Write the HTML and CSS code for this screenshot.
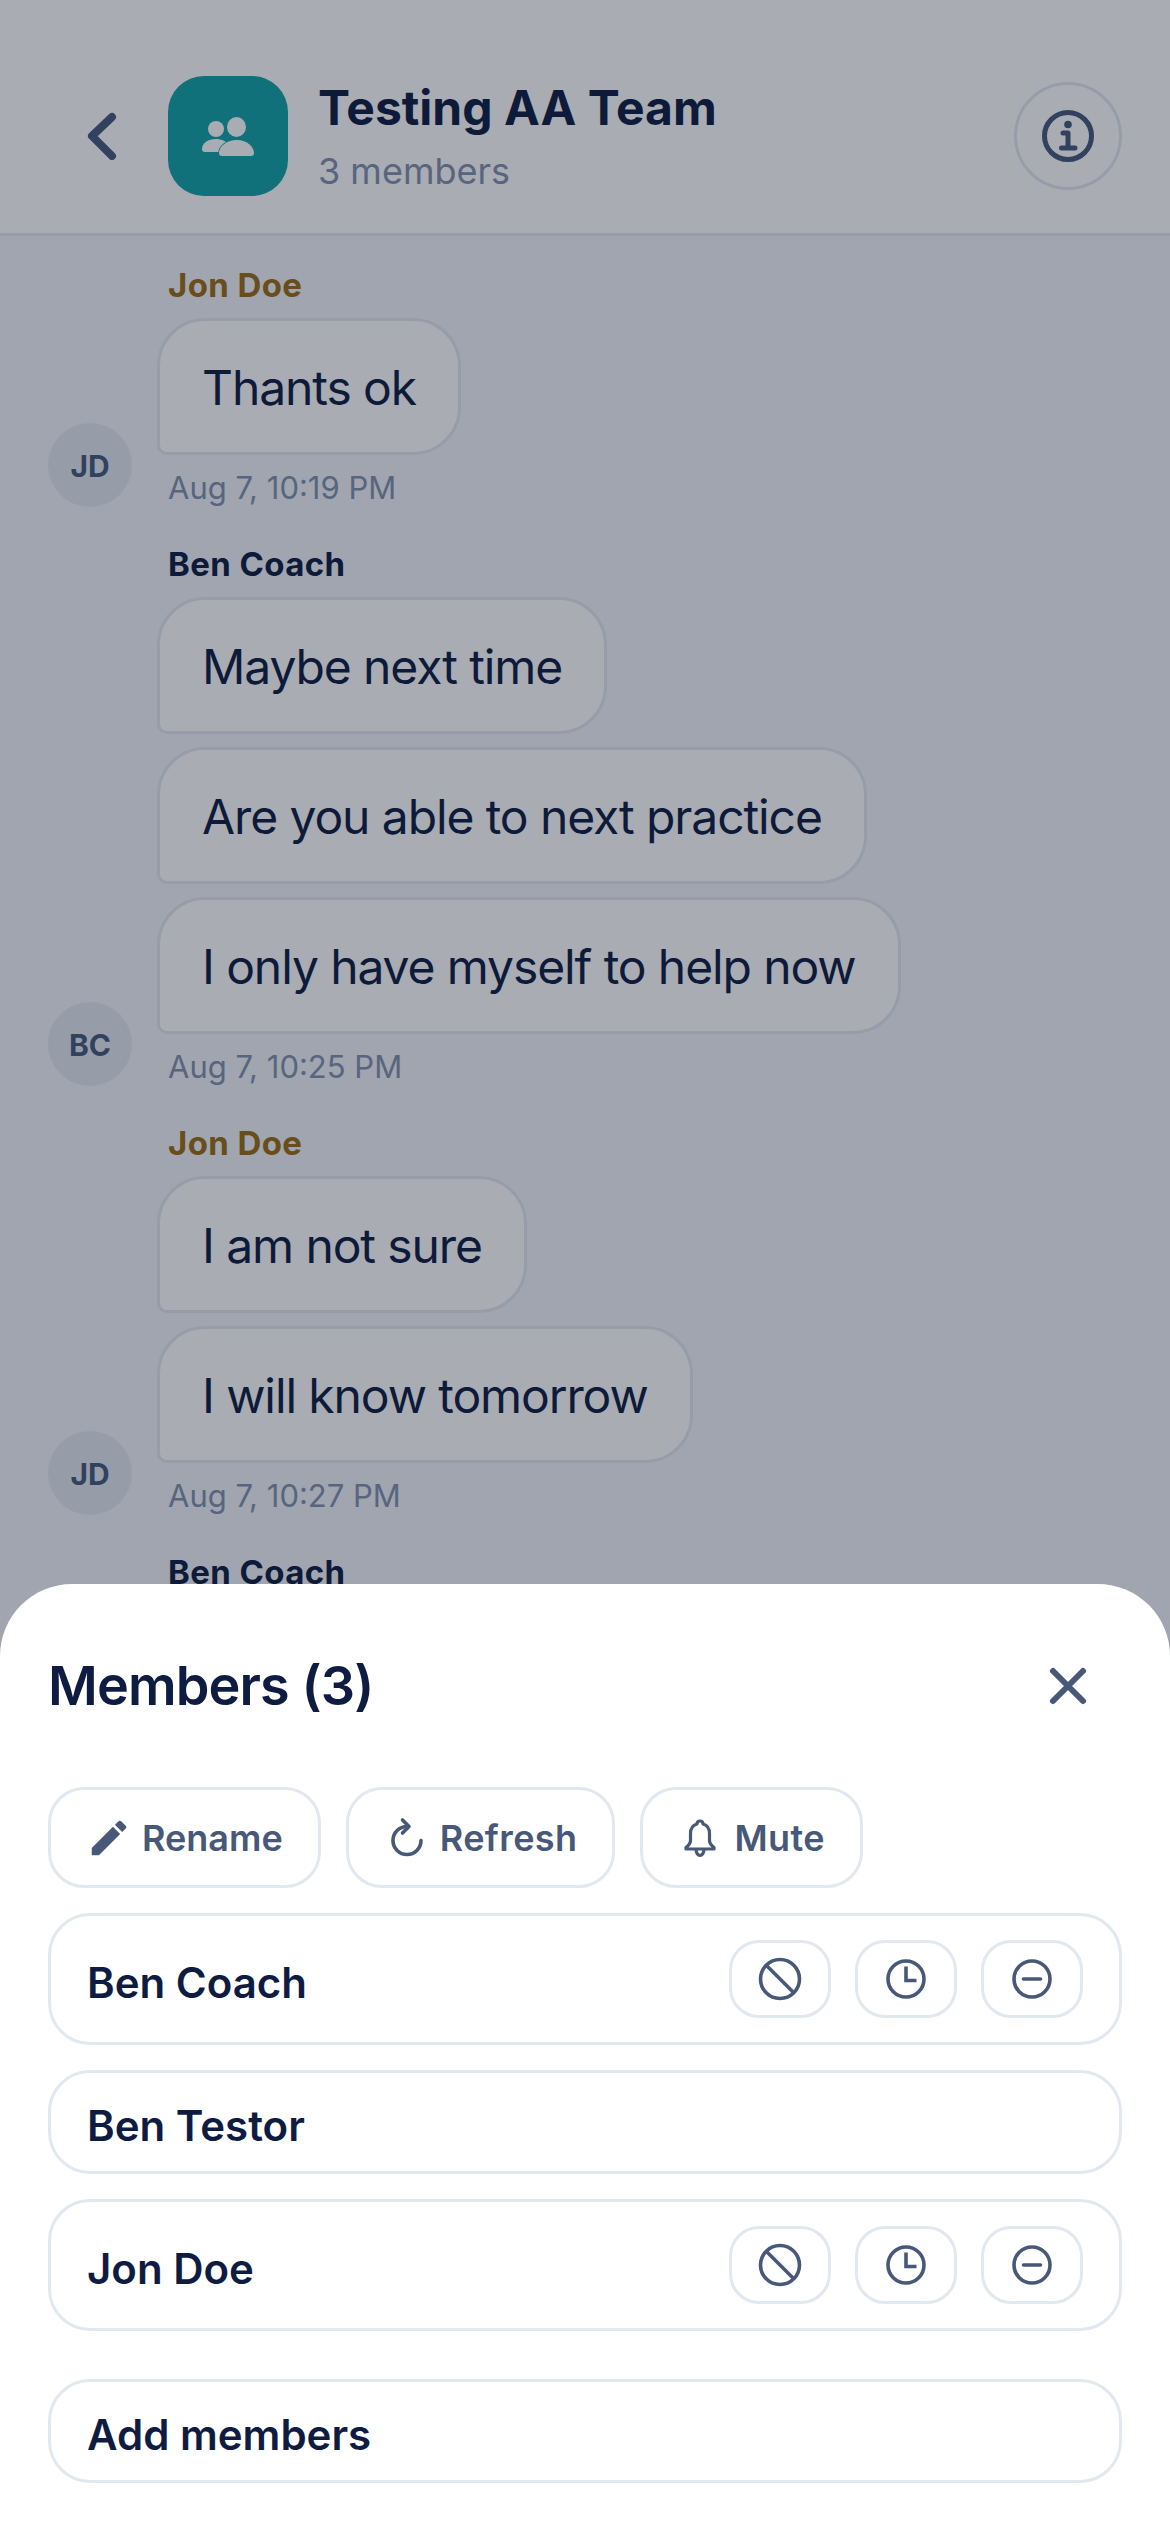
FILE: index.html
```html
<!DOCTYPE html>
<html lang="en">
<head>
  <meta charset="UTF-8" />
  <meta name="viewport" content="width=device-width, initial-scale=1.0"/>
  <title>Testing AA Team</title>
  <link rel="stylesheet" href="styles.css">
</head>
<body>
  <svg class="sprite" aria-hidden="true">
    <symbol id="icon-ban" viewBox="0 0 48 48">
      <circle cx="24" cy="24" r="19.5" fill="none" stroke="currentColor" stroke-width="3.6"/>
      <path d="M10.5 10.5L37.5 37.5" fill="none" stroke="currentColor" stroke-width="3.6"/>
    </symbol>
    <symbol id="icon-clock" viewBox="0 0 48 48">
      <circle cx="24" cy="24" r="18" fill="none" stroke="currentColor" stroke-width="3.6"/>
      <path d="M24 11.5V25.5H34.5" fill="none" stroke="currentColor" stroke-width="3.6"/>
    </symbol>
    <symbol id="icon-minus" viewBox="0 0 48 48">
      <circle cx="24" cy="24" r="18" fill="none" stroke="currentColor" stroke-width="3.6"/>
      <path d="M15.5 24H32.5" fill="none" stroke="currentColor" stroke-width="3.6" stroke-linecap="round"/>
    </symbol>
  </svg>

  <div class="chat-page">
    <header class="chat-header">
      <button class="back-btn" aria-label="Back">
        <svg width="32" height="48" viewBox="0 0 32 48">
          <path d="M26 5L6 24L26 44" fill="none" stroke="currentColor" stroke-width="8" stroke-linecap="round" stroke-linejoin="round"/>
        </svg>
      </button>
      <div class="team-tile">
        <svg width="56" height="44" viewBox="200 112 56 44">
          <circle cx="216" cy="127" r="8" fill="#fff"/>
          <path d="M202 147C202 141 208 137 216 137C221 137 226 139 229 143L222 150H205C203 150 202 149 202 147Z" fill="#fff"/>
          <ellipse cx="236.500" cy="125" rx="9.500" ry="10" fill="#fff"/>
          <path d="M219 151C219 144 227 138 237 138C247 138 254 145 254 151C254 153 253 154 251 154H222C220 154 219 153 219 151Z" fill="#fff" stroke="#12a4a8" stroke-width="1.500" paint-order="stroke"/>
        </svg>
      </div>
      <div class="team-info">
        <h1>Testing AA Team</h1>
        <p>3 members</p>
      </div>
      <button class="info-btn" aria-label="Info">
        <svg width="52" height="52" viewBox="0 0 52 52">
          <circle cx="26" cy="26" r="23.500" fill="none" stroke="currentColor" stroke-width="5"/>
          <circle cx="26" cy="14.500" r="3.800" fill="currentColor"/>
          <path d="M21 23H26V38M19.500 38H33" fill="none" stroke="currentColor" stroke-width="5" stroke-linecap="round" stroke-linejoin="round"/>
        </svg>
      </button>
    </header>

    <main class="chat-list">
      <section class="msg-group">
        <div class="avatar">JD</div>
        <div class="msg-body">
          <div class="sender sender-jon">Jon Doe</div>
          <div class="bubble">Thants ok</div>
          <div class="stamp">Aug 7, 10:19 PM</div>
        </div>
      </section>

      <section class="msg-group">
        <div class="avatar">BC</div>
        <div class="msg-body">
          <div class="sender">Ben Coach</div>
          <div class="bubble">Maybe next time</div>
          <div class="bubble">Are you able to next practice</div>
          <div class="bubble">I only have myself to help now</div>
          <div class="stamp">Aug 7, 10:25 PM</div>
        </div>
      </section>

      <section class="msg-group">
        <div class="avatar">JD</div>
        <div class="msg-body">
          <div class="sender sender-jon">Jon Doe</div>
          <div class="bubble">I am not sure</div>
          <div class="bubble">I will know tomorrow</div>
          <div class="stamp">Aug 7, 10:27 PM</div>
        </div>
      </section>

      <section class="msg-group">
        <div class="msg-body msg-body-solo">
          <div class="sender">Ben Coach</div>
        </div>
      </section>
    </main>
  </div>

  <div class="overlay"></div>

  <aside class="sheet">
    <div class="sheet-head">
      <h2>Members (3)</h2>
      <button class="close-btn" aria-label="Close">
        <svg width="40" height="40" viewBox="0 0 40 40">
          <path d="M5 5L35 35M35 5L5 35" fill="none" stroke="currentColor" stroke-width="6" stroke-linecap="round"/>
        </svg>
      </button>
    </div>

    <div class="sheet-actions">
      <button class="action-btn">
        <svg width="46" height="46" viewBox="0 0 24 24">
          <path fill="currentColor" d="M3 17.250V21h3.750L17.810 9.940l-3.750-3.750L3 17.250zM20.710 7.040a1 1 0 0 0 0-1.410l-2.340-2.340a1 1 0 0 0-1.410 0l-1.830 1.830 3.750 3.750 1.830-1.830z"/>
        </svg>
        Rename
      </button>
      <button class="action-btn">
        <svg width="46" height="46" viewBox="-5 -3 46 46">
          <path d="M18 8.500A14 14 0 1 0 32 22.500" fill="none" stroke="currentColor" stroke-width="3.600" stroke-linecap="round"/>
          <path d="M13.500 2L20 8.500L13.500 15" fill="none" stroke="currentColor" stroke-width="3.600" stroke-linecap="round" stroke-linejoin="round"/>
        </svg>
        Refresh
      </button>
      <button class="action-btn">
        <svg width="46" height="46" viewBox="-4 -3 46 46">
          <path d="M18 3C16 3 15 4.500 15 6C10 7.500 8.500 11.500 8.500 15.500V22.500C8.500 25.500 6.500 27.500 4 29.500V31H32V29.500C29.500 27.500 27.500 25.500 27.500 22.500V15.500C27.500 11.500 26 7.500 21 6C21 4.500 20 3 18 3Z" fill="none" stroke="currentColor" stroke-width="3.200" stroke-linejoin="round"/>
          <path d="M14 31C14 35 16 37.500 18 37.500C20 37.500 22 35 22 31" fill="none" stroke="currentColor" stroke-width="3.200"/>
        </svg>
        Mute
      </button>
    </div>

    <div class="member-list">
      <div class="member-row">
        <span class="member-name">Ben Coach</span>
        <div class="member-tools">
          <button class="tool-btn" aria-label="Ban"><svg width="48" height="48"><use href="#icon-ban"/></svg></button>
          <button class="tool-btn" aria-label="Timeout"><svg width="48" height="48"><use href="#icon-clock"/></svg></button>
          <button class="tool-btn" aria-label="Remove"><svg width="48" height="48"><use href="#icon-minus"/></svg></button>
        </div>
      </div>
      <div class="member-row">
        <span class="member-name">Ben Testor</span>
      </div>
      <div class="member-row">
        <span class="member-name">Jon Doe</span>
        <div class="member-tools">
          <button class="tool-btn" aria-label="Ban"><svg width="48" height="48"><use href="#icon-ban"/></svg></button>
          <button class="tool-btn" aria-label="Timeout"><svg width="48" height="48"><use href="#icon-clock"/></svg></button>
          <button class="tool-btn" aria-label="Remove"><svg width="48" height="48"><use href="#icon-minus"/></svg></button>
        </div>
      </div>
      <div class="member-row add-row">
        <span class="member-name">Add members</span>
      </div>
    </div>
  </aside>
</body>
</html>
```

FILE: styles.css
```css
* {
  box-sizing: border-box;
}

body {
  margin: 0;
  height: 2532px;
  overflow: hidden;
  background-color: #f1f5f9;
  color: #0f1c42;
  font-family: 'Inter', 'Liberation Sans', sans-serif;
}

button {
  font-family: inherit;
  background: none;
  border: none;
  padding: 0;
}

.sprite {
  display: none;
}

.chat-header {
  display: flex;
  align-items: center;
  height: 236px;
  padding: 38px 48px 0;
  background-color: #fff;
  border-bottom: 3px solid #e2e8f0;
}

.back-btn {
  display: flex;
  align-items: center;
  justify-content: center;
  width: 108px;
  margin-right: 12px;
  color: #475b7b;
}

.team-tile {
  display: flex;
  align-items: center;
  justify-content: center;
  width: 120px;
  height: 120px;
  border-radius: 36px;
  background-color: #12a4a8;
}

.team-info {
  margin-left: 30px;
}

.team-info h1 {
  margin: 0;
  font-size: 48px;
  line-height: 58px;
  font-weight: 700;
}

.team-info p {
  margin: 12px 0 0;
  font-size: 36px;
  line-height: 44px;
  color: #8391ad;
}

.info-btn {
  display: flex;
  align-items: center;
  justify-content: center;
  width: 108px;
  height: 108px;
  margin-left: auto;
  border: 3px solid #e2e8f0;
  border-radius: 50%;
  color: #475b7b;
}

.chat-list {
  display: flex;
  flex-direction: column;
  gap: 37px;
  padding: 29px 48px 0;
}

.msg-group {
  display: flex;
  align-items: flex-end;
  gap: 25px;
}

.msg-body {
  display: flex;
  flex-direction: column;
  align-items: flex-start;
  gap: 13px;
}

.msg-body-solo {
  margin-left: 109px;
}

.avatar {
  display: flex;
  align-items: center;
  justify-content: center;
  width: 84px;
  height: 84px;
  padding-top: 2px;
  border-radius: 50%;
  background-color: #e2e8f0;
  color: #475b7b;
  font-size: 30px;
  font-weight: 700;
}

.sender {
  margin-left: 11px;
  font-size: 33px;
  line-height: 40px;
  font-weight: 700;
  letter-spacing: 0.4px;
}

.sender-jon {
  color: #9c6c12;
}

.bubble {
  padding: 37px 42px 35px;
  background-color: #fff;
  border: 3px solid #e2e8f0;
  border-radius: 48px 48px 48px 10px;
  font-size: 48px;
  line-height: 59px;
  letter-spacing: -1.1px;
}

.stamp {
  margin: 1px 0 0 11px;
  font-size: 31px;
  line-height: 38px;
  color: #8391ad;
}

.overlay {
  position: fixed;
  inset: 0;
  background-color: rgba(15, 23, 42, 0.355);
}

.sheet {
  position: fixed;
  left: 0;
  right: 0;
  bottom: 0;
  padding: 69px 48px 49px;
  background-color: #fff;
  border-radius: 72px 72px 0 0;
}

.sheet-head {
  display: flex;
  justify-content: space-between;
  align-items: center;
  margin-bottom: 69px;
}

.sheet-head h2 {
  margin: 0;
  font-size: 54px;
  line-height: 65px;
  font-weight: 600;
  letter-spacing: -0.9px;
}

.close-btn {
  display: flex;
  margin-right: 34px;
  color: #485878;
}

.sheet-actions {
  display: flex;
  gap: 25px;
  margin-bottom: 25px;
}

.action-btn {
  display: flex;
  align-items: center;
  gap: 10px;
  height: 101px;
  padding: 0 35px;
  border: 3px solid #e2e8f0;
  border-radius: 36px;
  color: #485878;
  font-size: 36px;
  font-weight: 600;
}

.action-btn + .action-btn {
  letter-spacing: 0.4px;
}

.member-list {
  display: flex;
  flex-direction: column;
  gap: 25px;
}

.member-row {
  display: flex;
  justify-content: space-between;
  align-items: center;
  padding: 24px 36px;
  border: 3px solid #e2e8f0;
  border-radius: 42px;
}

.add-row {
  margin-top: 23px;
}

.member-name {
  padding-top: 8px;
  font-size: 42px;
  line-height: 42px;
  font-weight: 600;
}

.member-tools {
  display: flex;
  gap: 24px;
}

.tool-btn {
  display: flex;
  align-items: center;
  justify-content: center;
  width: 102px;
  height: 78px;
  border: 3px solid #e2e8f0;
  border-radius: 30px;
  color: #485878;
}
```
